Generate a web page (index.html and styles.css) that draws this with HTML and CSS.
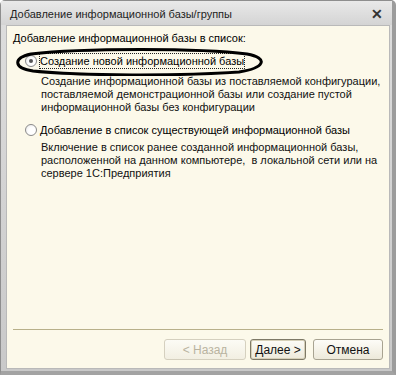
FILE: index.html
```html
<!DOCTYPE html>
<html lang="ru">
<head>
  <meta charset="UTF-8" />
  <title>Добавление информационной базы/группы</title>
  <link rel="stylesheet" href="styles.css">
</head>
<body>
  <div class="window">
    <div class="titlebar">
      <span class="title">Добавление информационной базы/группы</span>
      <span class="close">✕</span>
    </div>
    <div class="content">
      <div class="heading">Добавление информационной базы в список:</div>

      <div class="option">
        <div class="option-row">
          <span class="radio checked"></span>
          <span class="label focused">Создание новой информационной базы</span>
        </div>
        <div class="desc">Создание информационной базы из поставляемой конфигурации,<br>поставляемой демонстрационной базы или создание пустой<br>информационной базы без конфигурации</div>
      </div>

      <div class="option">
        <div class="option-row">
          <span class="radio"></span>
          <span class="label">Добавление в список существующей информационной базы</span>
        </div>
        <div class="desc">Включение в список ранее созданной информационной базы,<br>расположенной на данном компьютере,&nbsp; в локальной сети или на<br>сервере 1С:Предприятия</div>
      </div>

      <div class="spacer"></div>

      <div class="footer">
        <button class="btn" disabled>&lt; Назад</button>
        <button class="btn default">Далее &gt;</button>
        <button class="btn cancel">Отмена</button>
      </div>

      <svg class="mark" width="256" height="28" viewBox="0 0 256 28">
        <path d="M20 6 C 70 0, 190 0, 236 6 C 258 10, 254 20, 228 24 C 170 28, 70 28, 22 23 C 2 20, 2 10, 20 6 Z" fill="none" stroke="#000" stroke-width="3"/>
      </svg>
    </div>
  </div>
</body>
</html>
```

FILE: styles.css
```css
* {
  box-sizing: border-box;
}
body {
  margin: 0;
  width: 396px;
  height: 375px;
  font-family: 'Liberation Sans', Arial, sans-serif;
  font-size: 11px;
  color: #000;
  background: #ffffff;
}
.window {
  width: 396px;
  height: 375px;
  display: flex;
  flex-direction: column;
  background: linear-gradient(#dedede, #c9c9c9);
  border: 1px solid #8e8e8e;
  border-radius: 5px 5px 0 0;
  border-right: 4px solid #9c9c9c;
  border-bottom: 4px solid #a3a3a3;
}
.titlebar {
  height: 24px;
  flex: none;
  display: flex;
  align-items: center;
  justify-content: space-between;
  padding: 2px 10px 0 9px;
  background: linear-gradient(#e9e9e9, #d4d4d4);
}
.title {
  font-size: 11px;
  color: #1e1e1e;
}
.close {
  font-size: 14px;
  font-weight: bold;
  color: #333;
  margin-right: -1px;
}
.content {
  position: relative;
  flex: 1;
  margin: 0 2px 2px 5px;
  background: #fcf9ea;
  border: 1px solid #b9b9b9;
  padding: 5px 6px 8px 6px;
  display: flex;
  flex-direction: column;
}
.heading {
  line-height: 14px;
}
.option {
  margin-top: 8px;
}
.option + .option {
  margin-top: 8px;
}
.option-row {
  display: flex;
  align-items: center;
  gap: 2px;
  margin-left: 12px;
  line-height: 16px;
}
.radio {
  width: 12px;
  height: 12px;
  border-radius: 50%;
  border: 1px solid #8a8a8a;
  background: radial-gradient(circle at 60% 60%, #ffffff 40%, #e4e4e4);
  position: relative;
  flex: none;
}
.radio.checked::after {
  content: '';
  position: absolute;
  left: 3px;
  top: 3px;
  width: 4px;
  height: 4px;
  border-radius: 50%;
  background: #555;
}
.label {
  padding: 0 1px;
}
.label.focused {
  outline: 1px dotted #222;
  outline-offset: -1px;
}
.desc {
  margin: 6px 0 0 28px;
  line-height: 13px;
  white-space: nowrap;
  color: #111;
}
.option + .option .desc {
  margin-top: 3px;
}
.spacer {
  flex: 1;
}
.footer {
  border-top: 1px solid #b8b08a;
  display: flex;
  justify-content: flex-end;
  gap: 4px;
  padding-top: 9px;
}
.btn {
  font-family: 'Liberation Sans', Arial, sans-serif;
  font-size: 12px;
  height: 21px;
  border: 1px solid #a8a391;
  border-radius: 3px;
  background: linear-gradient(#fdfcf7, #ede9da);
  color: #111;
  padding: 0;
}
.btn[disabled] {
  width: 82px;
  color: #b9b3a0;
  border-color: #d5d0bf;
  background: linear-gradient(#fcfbf5, #f2efe2);
}
.btn.default {
  width: 56px;
  border: 1px solid #7e7966;
  box-shadow: inset 0 0 0 1px #d6d0b8;
}
.btn.cancel {
  width: 70px;
  margin-left: 3px;
}
.mark {
  position: absolute;
  left: 4px;
  top: 22px;
}
```
